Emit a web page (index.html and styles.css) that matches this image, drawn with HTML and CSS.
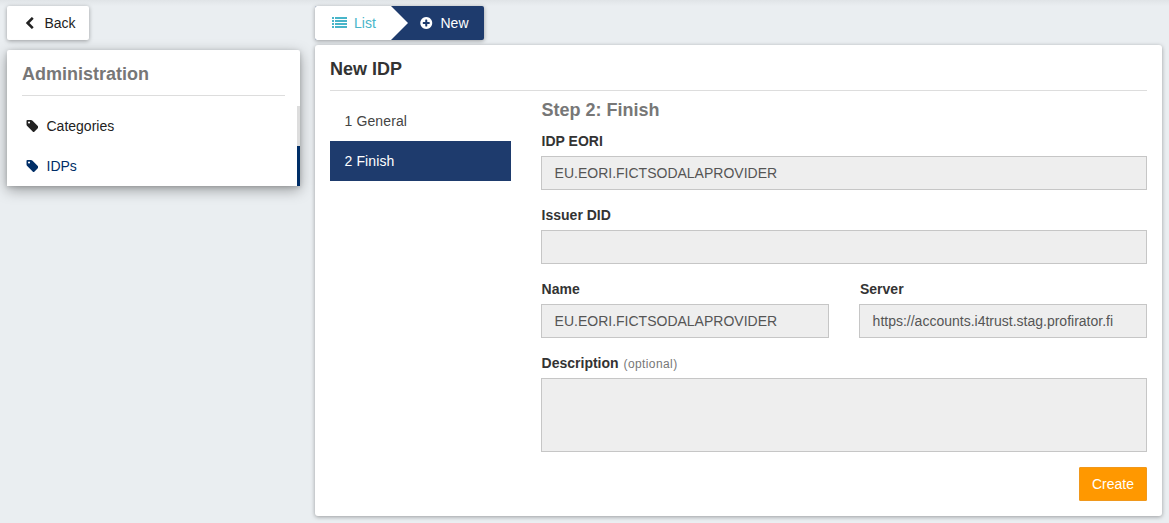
FILE: index.html
```html
<!DOCTYPE html>
<html lang="en">
<head>
<meta charset="utf-8">
<title>Administration - New IDP</title>
<link rel="stylesheet" href="styles.css">
</head>
<body>
<div class="page">
  <aside class="side">
    <a class="back"><svg class="ico chevron" viewBox="300 26 1192 1612"><path d="M1427 301l-531 531 531 531q19 19 19 45t-19 45l-166 166q-19 19-45 19t-45-19l-742-742q-19-19-19-45t19-45l742-742q19-19 45-19t45 19l166 166q19 19 19 45t-19 45z"/></svg>Back</a>
    <nav class="panel side-panel">
      <h2 class="side-title">Administration</h2>
      <a class="side-item"><svg class="ico tag" viewBox="64 128 1579 1515"><path d="M576 448q0-53-37.500-90.500t-90.500-37.500-90.500 37.500-37.500 90.500 37.500 90.500 90.500 37.500 90.500-37.500 37.500-90.500zm1067 576q0 53-37 90l-491 492q-39 37-91 37-53 0-90-37l-715-716q-38-37-64.500-101t-26.500-117v-416q0-52 38-90t90-38h416q53 0 117 26.500t102 64.500l715 714q37 39 37 91z"/></svg>Categories</a>
      <a class="side-item active"><svg class="ico tag" viewBox="64 128 1579 1515"><path d="M576 448q0-53-37.500-90.500t-90.500-37.500-90.500 37.500-37.500 90.500 37.500 90.500 90.500 37.500 90.500-37.500 37.500-90.500zm1067 576q0 53-37 90l-491 492q-39 37-91 37-53 0-90-37l-715-716q-38-37-64.500-101t-26.500-117v-416q0-52 38-90t90-38h416q53 0 117 26.500t102 64.500l715 714q37 39 37 91z"/></svg>IDPs</a>
    </nav>
  </aside>
  <main class="main">
    <div class="crumbs">
      <a class="crumb list"><svg class="ico list-ico" viewBox="0 0 15 11"><path d="M0 0h2v2H0zM3 0h12v2H3zM0 3h2v2H0zM3 3h12v2H3zM0 6h2v2H0zM3 6h12v2H3zM0 9h2v2H0zM3 9h12v2H3z"/></svg>List</a>
      <a class="crumb new"><svg class="ico plus" viewBox="128 128 1536 1536"><path d="M1344 960v-128q0-26-19-45t-45-19h-256v-256q0-26-19-45t-45-19h-128q-26 0-45 19t-19 45v256h-256q-26 0-45 19t-19 45v128q0 26 19 45t45 19h256v256q0 26 19 45t45 19h128q26 0 45-19t19-45v-256h256q26 0 45-19t19-45zm320-64q0 209-103 385.500t-279.500 279.500-385.500 103-385.500-103-279.500-279.500-103-385.500 103-385.500 279.500-279.500 385.500-103 385.500 103 279.500 279.500 103 385.500z"/></svg>New</a>
    </div>
    <section class="panel content">
      <h1 class="title">New IDP</h1>
      <div class="wizard">
        <div class="steps">
          <div class="step">1 General</div>
          <div class="step current">2 Finish</div>
        </div>
        <form class="form">
          <h2 class="form-title">Step 2: Finish</h2>
          <div class="field"><label class="label">IDP EORI</label><div class="input">EU.EORI.FICTSODALAPROVIDER</div></div>
          <div class="field"><label class="label">Issuer DID</label><div class="input"></div></div>
          <div class="row">
            <div class="field"><label class="label">Name</label><div class="input">EU.EORI.FICTSODALAPROVIDER</div></div>
            <div class="field"><label class="label server">Server</label><div class="input">https://accounts.i4trust.stag.profirator.fi</div></div>
          </div>
          <div class="field"><label class="label">Description <span class="optional">(optional)</span></label><div class="input area"></div></div>
          <div class="actions"><button class="create" type="button">Create</button></div>
        </form>
      </div>
    </section>
  </main>
</div>
</body>
</html>
```
FILE: styles.css
```css
* { box-sizing: border-box; }
body {
  margin: 0;
  height: 523px;
  overflow: hidden;
  background: linear-gradient(#e0e4e7, #eaeef1 6px);
  font: 14px/20px "Liberation Sans", Arial, sans-serif;
  color: #222;
}
h1, h2 { margin: 0; font-size: 18px; font-weight: bold; }
.ico { display: block; flex: none; fill: currentColor; }
.page { display: flex; align-items: flex-start; gap: 15px; padding: 6px 7px; }
.side { width: 293px; display: flex; flex-direction: column; align-items: flex-start; gap: 10px; }
.panel { background: #fff; border-radius: 3px; }
.back {
  display: flex; align-items: center;
  width: 82px; height: 34px; padding-left: 18px;
  background: #fff; border-radius: 2px;
  box-shadow: 0 1px 4px rgba(0,0,0,.35);
}
.chevron { width: 9px; height: 12px; margin-right: 10.500px; margin-bottom: 1px; }
.side-panel { width: 293px; height: 136px; border-radius: 2px 2px 0 0; box-shadow: 0 4px 14px rgba(0,0,0,.34), 0 1px 4px rgba(0,0,0,.16); }
.side-title { height: 46px; margin: 0 15px 10px; padding-top: 14px; border-bottom: 1px solid #ddd; color: #777; }
.side-item { display: flex; align-items: center; height: 40px; padding-left: 18.500px; border-right: 3px solid #ddd; }
.side-item.active { color: #002e67; border-color: #002e67; }
.tag { width: 12.500px; height: 12px; margin-right: 8.500px; margin-bottom: 1px; }
.main { width: 847px; }
.crumbs {
  display: flex; width: 169px; height: 34px; margin-bottom: 5px;
  border-radius: 2px; background: #1e3b6d;
  box-shadow: 0 1px 4px rgba(0,0,0,.35);
}
.crumb { display: flex; align-items: center; }
.crumb.list {
  width: 93px; padding-left: 17px; color: #48b5c9; background: #fff;
  border-radius: 2px 0 0 2px;
  clip-path: polygon(0 0, 76px 0, 93px 50%, 76px 100%, 0 100%);
}
.list-ico { width: 15px; height: 11px; margin-right: 7px; margin-bottom: 1px; }
.crumb.new { padding-left: 12px; color: #fff; }
.plus { width: 12.500px; height: 12px; margin-right: 8px; }
.content { height: 471px; padding: 0 15px; box-shadow: 0 1px 4px rgba(0,0,0,.35); }
.title { height: 46px; padding-top: 14px; border-bottom: 1px solid #ddd; color: #333; }
.wizard { display: flex; gap: 30px; }
.steps { width: 181px; padding-top: 10px; }
.step { height: 40px; padding: 10px 14.500px; letter-spacing: .12px; color: #444; }
.step.current { background: #1e3b6d; color: #fff; }
.form { width: 606px; padding-top: 9px; }
.form-title { height: 31px; padding-left: .6px; color: #777; }
.field { flex: 1; margin-bottom: 15px; }
.row { display: flex; gap: 30px; }
.label { display: block; height: 25px; padding-left: .6px; font-weight: bold; color: #333; }
.label.server { padding-left: 1px; }
.optional { margin-left: 1px; font-size: 12px; letter-spacing: .4px; font-weight: normal; color: #777; }
.input { height: 34px; padding: 6px 12.600px; background: #eee; border: 1px solid #c6c6c6; color: #555; }
.input.area { height: 74px; }
.actions { display: flex; justify-content: flex-end; }
.create {
  width: 68px; height: 34px; padding: 0; border: 1px solid #f0981c; border-radius: 1px;
  background: #ff9800; color: #fff; font: inherit;
}
```
